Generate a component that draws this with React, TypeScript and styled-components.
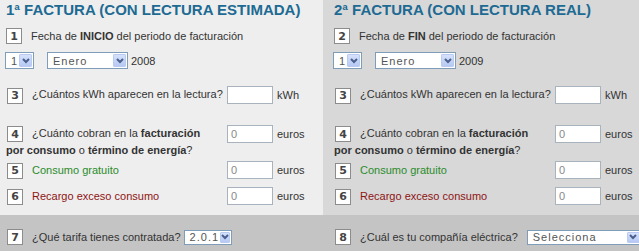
import React from 'react';
import styled, { createGlobalStyle } from 'styled-components';

const GlobalStyle = createGlobalStyle`
  html, body {
    margin: 0;
    padding: 0;
    background: #fff;
  }
  body {
    font-family: "Liberation Sans", Arial, sans-serif;
    font-size: 11px;
    color: #333;
  }
`;

const Page = styled.div`
  width: 639px;
  height: 251px;
  display: grid;
  grid-template-columns: 323px 316px;
  grid-template-rows: 215px 36px;
  overflow: hidden;
`;

const Panel = styled.div<{ $bg: string; $pad: number }>`
  background: ${(p) => p.$bg};
  padding-left: ${(p) => p.$pad}px;
  display: flex;
  flex-direction: column;
`;

const Title = styled.h2`
  margin: 0;
  padding-top: 1px;
  height: 18px;
  line-height: 18px;
  font-size: 15px;
  font-weight: bold;
  color: #1d6a93;
  white-space: nowrap;
`;

const StepLine = styled.div<{ $mt: number }>`
  display: flex;
  align-items: center;
  height: 16px;
  margin-top: ${(p) => p.$mt}px;
`;

const Step = styled.span`
  display: inline-flex;
  align-items: center;
  justify-content: center;
  width: 16px;
  height: 16px;
  box-sizing: border-box;
  background: #fff;
  border: 1px solid #8c8c8c;
  font: bold 11px "DejaVu Sans", sans-serif;
  color: #444;
  margin-right: 9px;
  vertical-align: middle;
`;

const DateRow = styled.div`
  display: flex;
  align-items: center;
  height: 17px;
  margin-top: 8px;
  margin-left: -1px;
`;

const SelectBox = styled.div<{ $w: number; $h: number; $ml?: number }>`
  width: ${(p) => p.$w}px;
  height: ${(p) => p.$h}px;
  margin-left: ${(p) => p.$ml ?? 0}px;
  box-sizing: border-box;
  border: 1px solid #7f9db9;
  background: #fff;
  display: flex;
  align-items: center;
  justify-content: space-between;
  padding-left: 5px;
  font-family: "Liberation Sans", Arial, sans-serif;
  font-size: 11px;
  letter-spacing: 1px;
  color: #555;
  flex-shrink: 0;
`;

const SelectArrow = styled.span`
  width: 13px;
  align-self: stretch;
  margin: 1px;
  box-sizing: border-box;
  border: 1px solid #b9cbf3;
  border-radius: 1px;
  background: linear-gradient(#d6e1fb, #b6c9f3);
  display: flex;
  align-items: center;
  justify-content: center;
`;

const Year = styled.span`
  margin-left: 3px;
`;

const FieldRow = styled.div<{ $mt: number; $top?: boolean }>`
  display: grid;
  grid-template-columns: 220px 46px auto;
  align-items: ${(p) => (p.$top ? 'start' : 'center')};
  margin-top: ${(p) => p.$mt}px;
  margin-left: 1px;
`;

const Label = styled.div<{ $color?: string }>`
  line-height: 17px;
  color: ${(p) => p.$color ?? '#333'};
  white-space: nowrap;
`;

const Strong = styled.b`
  font-weight: bold;
  color: #333;
`;

const Wrapped = styled.span`
  margin-left: -1px;
`;

const NumInput = styled.input`
  width: 46px;
  height: 18px;
  box-sizing: border-box;
  margin: 0;
  padding: 0 3px;
  border: 1px solid #a9b3bd;
  background: #fff;
  font: 11px "Liberation Sans", Arial, sans-serif;
  color: #888;
  outline: none;
`;

const Unit = styled.span`
  margin-left: 4px;
  line-height: 18px;
`;

const Band = styled.div<{ $pad: number }>`
  background: #c4c4c4;
  padding: 14px 0 0 ${(p) => p.$pad}px;
  display: flex;
  align-items: flex-start;
`;

const BandLine = styled.div`
  display: flex;
  align-items: center;
  height: 16px;
  white-space: nowrap;
`;

const Chevron = () => (
  <svg width="8" height="6" viewBox="0 0 8 6">
    <polyline points="1,1 4,4 7,1" fill="none" stroke="#4a5f8c" strokeWidth="2" />
  </svg>
);

const Select = ({ w, h = 17, ml, value }: { w: number; h?: number; ml?: number; value: string }) => (
  <SelectBox $w={w} $h={h} $ml={ml}>
    <span>{value}</span>
    <SelectArrow>
      <Chevron />
    </SelectArrow>
  </SelectBox>
);

const Bill = ({ n, title, mark, year }: { n: string; title: string; mark: string; year: string }) => (
  <>
    <Title>{title}</Title>
    <StepLine $mt={9}>
      <Step>{n}</Step>
      <span>
        Fecha de <Strong>{mark}</Strong> del periodo de facturación
      </span>
    </StepLine>
    <DateRow>
      <Select w={29} value="1" />
      <Select w={81} ml={13} value="Enero" />
      <Year>{year}</Year>
    </DateRow>
    <FieldRow $mt={17}>
      <Label>
        <Step>3</Step>¿Cuántos kWh aparecen en la lectura?
      </Label>
      <NumInput defaultValue="" />
      <Unit>kWh</Unit>
    </FieldRow>
    <FieldRow $mt={21} $top>
      <Label>
        <Step>4</Step>¿Cuánto cobran en la <Strong>facturación</Strong>
        <br />
        <Wrapped>
          <Strong>por consumo</Strong> o <Strong>término de energía</Strong>?
        </Wrapped>
      </Label>
      <NumInput defaultValue="0" />
      <Unit>euros</Unit>
    </FieldRow>
    <FieldRow $mt={2}>
      <Label $color="#2b8c2b">
        <Step>5</Step>Consumo gratuito
      </Label>
      <NumInput defaultValue="0" />
      <Unit>euros</Unit>
    </FieldRow>
    <FieldRow $mt={8}>
      <Label $color="#8e1414">
        <Step>6</Step>Recargo exceso consumo
      </Label>
      <NumInput defaultValue="0" />
      <Unit>euros</Unit>
    </FieldRow>
  </>
);

const App: React.FC = () => {
  return (
    <>
      <GlobalStyle />
      <Page>
        <Panel $bg="#eeeeee" $pad={6}>
          <Bill n="1" title="1ª FACTURA (CON LECTURA ESTIMADA)" mark="INICIO" year="2008" />
        </Panel>
        <Panel $bg="#d8d8d8" $pad={11}>
          <Bill n="2" title="2ª FACTURA (CON LECTURA REAL)" mark="FIN" year="2009" />
        </Panel>
        <Band $pad={7}>
          <BandLine>
            <Step>7</Step>¿Qué tarifa tienes contratada?
            <Select w={48} h={15} ml={3} value="2.0.1" />
          </BandLine>
        </Band>
        <Band $pad={12}>
          <BandLine>
            <Step>8</Step>¿Cuál es tu compañía eléctrica?
            <Select w={115} h={15} ml={9} value="Selecciona" />
          </BandLine>
        </Band>
      </Page>
    </>
  );
};

export default App;
